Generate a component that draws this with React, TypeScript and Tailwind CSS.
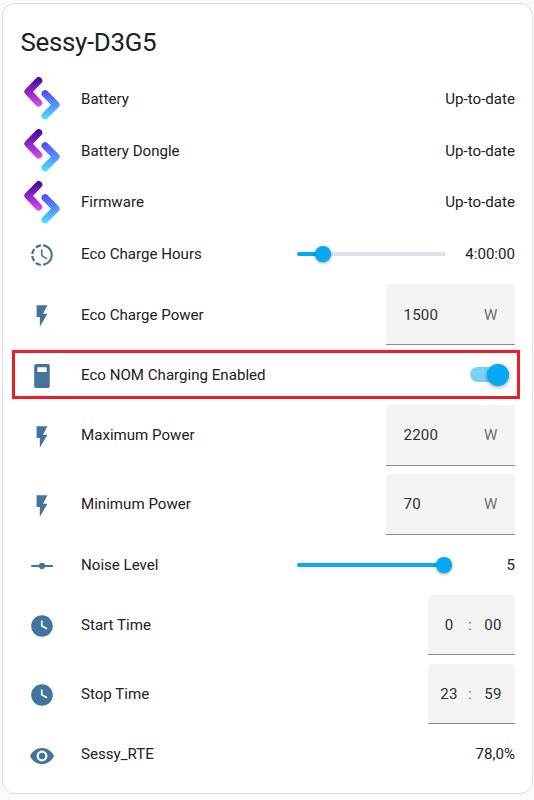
import { useId, type ReactNode } from "react";

const icons = {
  progressClock:
    "M13,2.03V2.05L13,4.05C17.39,4.59 20.5,8.58 19.96,12.97C19.5,16.61 16.64,19.5 13,19.93V21.93C18.5,21.38 22.5,16.5 21.95,11C21.5,6.25 17.73,2.5 13,2.03M11,2.06C9.05,2.25 7.19,3 5.67,4.26L7.1,5.74C8.22,4.84 9.57,4.26 11,4.06V2.06M4.26,5.67C3,7.19 2.25,9.04 2.05,11H4.05C4.24,9.58 4.8,8.23 5.69,7.1L4.26,5.67M2.06,13C2.26,14.96 3.03,16.81 4.27,18.33L5.69,16.9C4.81,15.77 4.24,14.42 4.06,13H2.06M7.1,18.37L5.67,19.74C7.18,21 9.04,21.79 11,22V20C9.58,19.82 8.23,19.25 7.1,18.37M12.5,7V12.25L17,14.92L16.25,16.15L11,13V7H12.5Z",
  flash: "M7,2V13H10V22L17,10H13L17,2H7Z",
  meter:
    "M6.4,1H17.6A1.6,1.6 0 0,1 19.2,2.6V21.4A1.6,1.6 0 0,1 17.6,23H6.4A1.6,1.6 0 0,1 4.8,21.4V2.6A1.6,1.6 0 0,1 6.4,1M8.2,4A0.5,0.5 0 0,0 7.7,4.5V8.2H16.3V4.5A0.5,0.5 0 0,0 15.8,4H8.2Z",
  rayVertex:
    "M22,11H14.82C14.4,9.84 13.3,9 12,9C10.7,9 9.6,9.84 9.18,11H2V13H9.18C9.6,14.16 10.7,15 12,15C13.3,15 14.4,14.16 14.82,13H22V11Z",
  clock:
    "M12 2C6.5 2 2 6.5 2 12C2 17.5 6.5 22 12 22C17.5 22 22 17.5 22 12S17.5 2 12 2M16.3 15.2L11 12.3V7H12.5V11.4L17 13.9L16.3 15.2Z",
  eye: "M12,9A3,3 0 0,0 9,12A3,3 0 0,0 12,15A3,3 0 0,0 15,12A3,3 0 0,0 12,9M12,17A5,5 0 0,1 7,12A5,5 0 0,1 12,7A5,5 0 0,1 17,12A5,5 0 0,1 12,17M12,4.5C7,4.5 2.73,7.61 1,12C2.73,16.39 7,19.5 12,19.5C17,19.5 21.27,16.39 23,12C21.27,7.61 17,4.5 12,4.5Z",
};

function StateIcon({ name }: { name: keyof typeof icons }) {
  return (
    <svg viewBox="0 0 24 24" className="mt-[2.4px] mr-[2px] size-[26px] fill-[#44739e]" fillRule="evenodd">
      <path d={icons[name]} />
    </svg>
  );
}

function SessyLogo() {
  const id = useId();

  return (
    <svg viewBox="0 0 43 43" className="mb-[0.6px] size-[43px]" fill="none" strokeWidth="7.2" strokeLinecap="round" strokeLinejoin="round">
      <defs>
        <linearGradient id={`${id}-left`} gradientUnits="userSpaceOnUse" x1="12" y1="2" x2="14" y2="30">
          <stop offset="0" stopColor="#470a9a" />
          <stop offset="1" stopColor="#e04df2" />
        </linearGradient>
        <linearGradient id={`${id}-right`} gradientUnits="userSpaceOnUse" x1="28" y1="13" x2="28" y2="42">
          <stop offset="0" stopColor="#5a43f7" />
          <stop offset="1" stopColor="#4be0ff" />
        </linearGradient>
      </defs>
      <path d="M17.7 3.7L7 14.8L17.7 26" stroke={`url(#${id}-left)`} />
      <path d="M24.1 16.8L35 27.8L24.1 38.8" stroke={`url(#${id}-right)`} />
    </svg>
  );
}

function Row({ icon, label, children, tall = false, highlighted = false }: {
  icon: ReactNode;
  label: string;
  children: ReactNode;
  tall?: boolean;
  highlighted?: boolean;
}) {
  return (
    <div className={`relative flex shrink-0 items-center ${tall ? "h-[60.4px]" : "h-[43.1px]"}`}>
      <div className="flex w-[43px] shrink-0 justify-center">{icon}</div>
      <div className="ml-[17px] flex-1 whitespace-nowrap">{label}</div>
      {children}
      {highlighted && (
        <div className="absolute -top-[3.3px] -right-[5px] -left-[9px] h-[49px] border-3 border-[#ee1c24]" />
      )}
    </div>
  );
}

function Slider({ percent, value }: { percent: number; value: string }) {
  return (
    <div className="flex items-center">
      <div className="relative h-1 w-[149px] rounded-full bg-[#e3dfeb]">
        <div className="h-full rounded-full bg-[#03a9f4]" style={{ width: `${percent}%` }} />
        <div
          className="absolute -top-[6px] -ml-2 size-4 rounded-full bg-[#03a9f4] shadow-[0_1px_3px_rgba(0,0,0,0.45)]"
          style={{ left: `${percent}%` }}
        />
      </div>
      <div className="w-[69px] text-right">{value}</div>
    </div>
  );
}

function Toggle() {
  return (
    <div className="relative mr-[6px] h-[15px] w-[39px] rounded-full bg-[#7bd2f9]">
      <div className="absolute -top-[3.5px] right-0 size-[22px] rounded-full bg-[#03a9f4] shadow-[0_1px_4px_rgba(0,0,0,0.4)]" />
    </div>
  );
}

function NumberField({ value }: { value: string }) {
  return (
    <div className="flex h-full w-[129px] items-center justify-between rounded-t-[4px] border-b border-[#8a8a8a] bg-[#f4f4f4] pt-px pr-[17.5px] pl-[17.5px] tracking-[0.15px] text-[#303030]">
      <span>{value}</span>
      <span className="text-[#707070]">W</span>
    </div>
  );
}

function TimeField({ hours, minutes }: { hours: string; minutes: string }) {
  return (
    <div className="flex h-full w-[87px] items-center rounded-t-[4px] border-b border-[#8a8a8a] bg-[#f4f4f4] pt-px tracking-[0.15px] text-[#303030]">
      <span className="w-[42px] text-center">{hours}</span>
      <span className="-ml-[2px] w-[4px] text-[#606060]">:</span>
      <span className="w-[42px] text-center">{minutes}</span>
    </div>
  );
}

export default function App() {
  return (
    <main className="h-[800px] w-[534px] bg-[#fafafa] pt-[2.5px] pl-[2px] font-[Roboto,sans-serif] text-[15.1px] leading-5 text-[#212121]">
      <section className="flex h-[791px] w-[531px] flex-col rounded-[13px] border border-[#dedede] bg-white pr-[17px] pl-[18px]">
        <h1 className="-ml-[0.5px] h-[74px] shrink-0 pt-[21.4px] text-[25.9px] leading-[35px] tracking-[-0.32px]">Sessy-D3G5</h1>

        <div className="flex flex-col gap-[8.63px]">
          <Row icon={<SessyLogo />} label="Battery">Up-to-date</Row>
          <Row icon={<SessyLogo />} label="Battery Dongle">Up-to-date</Row>
          <Row icon={<SessyLogo />} label="Firmware">Up-to-date</Row>
          <Row icon={<StateIcon name="progressClock" />} label="Eco Charge Hours">
            <Slider percent={17.4} value="4:00:00" />
          </Row>
          <Row icon={<StateIcon name="flash" />} label="Eco Charge Power" tall>
            <NumberField value="1500" />
          </Row>
          <Row icon={<StateIcon name="meter" />} label="Eco NOM Charging Enabled" highlighted>
            <Toggle />
          </Row>
          <Row icon={<StateIcon name="flash" />} label="Maximum Power" tall>
            <NumberField value="2200" />
          </Row>
          <Row icon={<StateIcon name="flash" />} label="Minimum Power" tall>
            <NumberField value="70" />
          </Row>
          <Row icon={<StateIcon name="rayVertex" />} label="Noise Level">
            <Slider percent={98.7} value="5" />
          </Row>
          <Row icon={<StateIcon name="clock" />} label="Start Time" tall>
            <TimeField hours="0" minutes="00" />
          </Row>
          <Row icon={<StateIcon name="clock" />} label="Stop Time" tall>
            <TimeField hours="23" minutes="59" />
          </Row>
          <Row icon={<StateIcon name="eye" />} label="Sessy_RTE">78,0%</Row>
        </div>
      </section>
    </main>
  );
}
